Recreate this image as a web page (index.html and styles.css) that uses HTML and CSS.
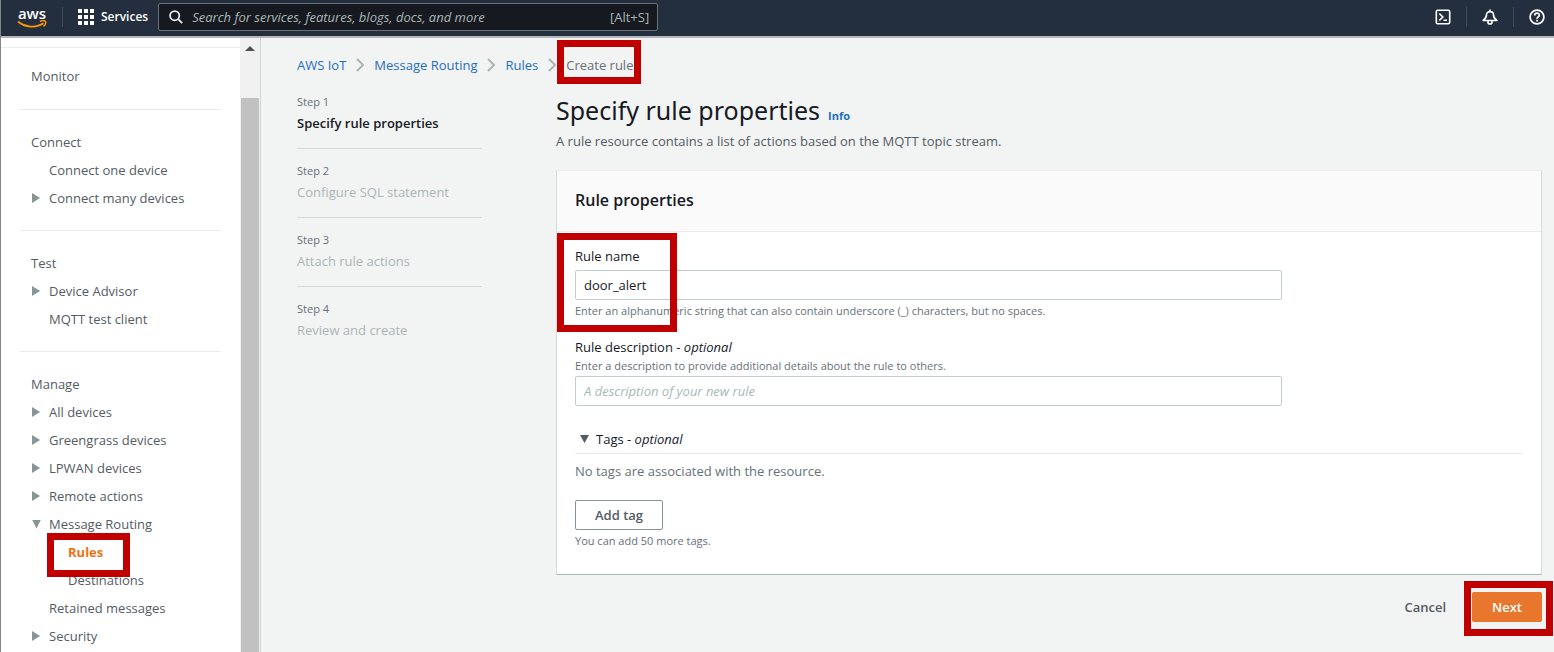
FILE: index.html
```html
<!DOCTYPE html>
<html lang="en">
<head>
<meta charset="utf-8">
<title>Create rule - AWS IoT</title>
<link rel="stylesheet" href="styles.css">
</head>
<body>
<header class="topbar">
  <a class="logo" href="#" aria-label="AWS home">
    <span class="logo-text">aws</span>
    <svg class="logo-smile" viewBox="0 0 30 9" aria-hidden="true"><path d="M1 1.5C8 7.5 19 8.3 26.500 3.300" fill="none" stroke="#f90" stroke-width="1.800"/><path d="M22.800 1.500C25 .6 27.700.6 28.400 1.400C29 2.500 28.200 5 26.600 6.600" fill="none" stroke="#f90" stroke-width="1.400"/></svg>
  </a>
  <span class="sep"></span>
  <button class="services" type="button">
    <svg width="16" height="16" viewBox="0 0 16 16" fill="#fff" aria-hidden="true"><path d="M0 0h4v4H0zM6 0h4v4H6zM12 0h4v4h-4zM0 6h4v4H0zM6 6h4v4H6zM12 6h4v4h-4zM0 12h4v4H0zM6 12h4v4H6zM12 12h4v4h-4z"/></svg>
    Services
  </button>
  <label class="search">
    <svg width="14" height="14" viewBox="0 0 14 14" fill="none" stroke="#e4e7ea" stroke-width="1.800" aria-hidden="true"><circle cx="5.700" cy="5.700" r="4.600"/><path d="M9 9l4.200 4.200"/></svg>
    <input type="search" aria-label="Search" placeholder="Search for services, features, blogs, docs, and more">
    <span class="hint">[Alt+S]</span>
  </label>
  <div class="tools">
    <button type="button" aria-label="CloudShell"><svg width="16" height="16" viewBox="0 0 16 16" fill="none" stroke="#fff" stroke-width="1.600"><rect x="1.300" y="1.300" width="13.400" height="13.400" rx="1.500"/><path d="M4.300 4.500L7.800 8l-3.500 3.500M8.500 11.300h3.500"/></svg></button>
    <span class="sep"></span>
    <button type="button" aria-label="Notifications"><svg width="16" height="16" viewBox="0 0 16 16" fill="none" stroke="#fff" stroke-width="1.600" stroke-linejoin="round"><path d="M1.200 11.500C3.200 10 4.500 8.500 4.500 5.800c0-1.900 1.500-3.200 3.500-3.200S11.500 3.900 11.500 5.800c0 2.700 1.300 4.200 3.300 5.700zM8 .5v2M6 12v1.200c0 2.400 4 2.400 4 0V12"/></svg></button>
    <span class="sep"></span>
    <button type="button" aria-label="Help"><svg width="16" height="16" viewBox="0 0 16 16" fill="none" stroke="#fff" stroke-width="1.700"><circle cx="8" cy="8" r="6.900"/><path d="M5.700 6.400C5.700 3.500 10.300 3.500 10.300 6.200C10.300 7.900 8 7.900 8 9.800M8 10.800v1.700"/></svg></button>
  </div>
</header>

<div class="shell">
  <nav class="sidebar" aria-label="AWS IoT">
    <div class="sections">
      <ul class="section first"><li><a href="#">Monitor</a></li></ul>
      <ul class="section">
        <li class="title">Connect</li>
        <li class="leaf"><a href="#">Connect one device</a></li>
        <li class="branch"><a href="#">Connect many devices</a></li>
      </ul>
      <ul class="section">
        <li class="title">Test</li>
        <li class="branch"><a href="#">Device Advisor</a></li>
        <li class="leaf"><a href="#">MQTT test client</a></li>
      </ul>
      <ul class="section">
        <li class="title">Manage</li>
        <li class="branch"><a href="#">All devices</a></li>
        <li class="branch"><a href="#">Greengrass devices</a></li>
        <li class="branch"><a href="#">LPWAN devices</a></li>
        <li class="branch"><a href="#">Remote actions</a></li>
        <li class="branch open"><a href="#">Message Routing</a></li>
        <li>
          <ul class="sub">
            <li class="marked"><a class="active" href="#" aria-current="page">Rules</a><span class="mark mark-nav"></span></li>
            <li><a href="#">Destinations</a></li>
          </ul>
        </li>
        <li class="leaf"><a href="#">Retained messages</a></li>
        <li class="branch"><a href="#">Security</a></li>
      </ul>
    </div>
    <div class="scrollbar" aria-hidden="true"><span class="arrow"></span><span class="thumb"></span></div>
  </nav>

  <main class="main">
    <nav class="crumbs" aria-label="Breadcrumb">
      <a href="#">AWS IoT</a>
      <svg class="chev" viewBox="0 0 8 14"><path d="M1 1l6 6-6 6"/></svg>
      <a href="#">Message Routing</a>
      <svg class="chev" viewBox="0 0 8 14"><path d="M1 1l6 6-6 6"/></svg>
      <a href="#">Rules</a>
      <svg class="chev" viewBox="0 0 8 14"><path d="M1 1l6 6-6 6"/></svg>
      <span class="marked current">Create rule<span class="mark mark-crumb"></span></span>
    </nav>
    <div class="wizard">
      <ol class="steps">
        <li class="now"><span>Step 1</span><b>Specify rule properties</b></li>
        <li><span>Step 2</span><b>Configure SQL statement</b></li>
        <li><span>Step 3</span><b>Attach rule actions</b></li>
        <li><span>Step 4</span><b>Review and create</b></li>
      </ol>
      <form class="form">
        <div class="heading"><h1>Specify rule properties</h1><a href="#">Info</a></div>
        <p class="intro">A rule resource contains a list of actions based on the MQTT topic stream.</p>
        <section class="panel">
          <h2>Rule properties</h2>
          <div class="body">
            <div class="field marked">
              <label for="name">Rule name</label>
              <input id="name" type="text" value="door_alert">
              <p class="help after">Enter an alphanumeric string that can also contain underscore (_) characters, but no spaces.</p>
              <span class="mark mark-name"></span>
            </div>
            <div class="field">
              <label class="tight" for="desc">Rule description - <i>optional</i></label>
              <p class="help before">Enter a description to provide additional details about the rule to others.</p>
              <input id="desc" type="text" placeholder="A description of your new rule">
            </div>
            <details open>
              <summary><span>Tags - <i>optional</i></span></summary>
              <p class="empty">No tags are associated with the resource.</p>
              <button class="btn outline" type="button">Add tag</button>
              <p class="help after">You can add 50 more tags.</p>
            </details>
          </div>
        </section>
        <div class="actions">
          <button class="btn plain" type="button">Cancel</button>
          <span class="marked"><button class="btn primary" type="button">Next</button><span class="mark mark-next"></span></span>
        </div>
      </form>
    </div>
  </main>
</div>
</body>
</html>
```

FILE: styles.css
```css
* { box-sizing: border-box; }
body {
  margin: 0;
  height: 100vh;
  display: flex;
  flex-direction: column;
  overflow: hidden;
  border-left: 1px solid #858585;
  background: #f2f3f3;
  color: #16191f;
  font: 13px/20px "Open Sans", "Noto Sans", sans-serif;
}
ul, ol { list-style: none; margin: 0; padding: 0; }
h1, h2, p { margin: 0; }
button, input { font: inherit; }
a { color: #1f6fbf; text-decoration: none; }
svg { display: block; flex: none; }

.topbar {
  display: flex;
  align-items: center;
  flex: none;
  height: 38px;
  padding: 0 9px 2px 16px;
  background: #232f3e;
  border-bottom: 2px solid #b3b7ba;
}
.logo { display: flex; flex-direction: column; width: 30px; align-items: center; color: #fff; }
.logo-text { font: 600 15px/14px "Open Sans", sans-serif; }
.logo-smile { width: 30px; height: 9px; }
.sep { width: 1px; height: 20px; background: #414d5c; }
.logo + .sep { margin: 0 15px; }
.services {
  display: flex; align-items: center; gap: 7px;
  padding: 0; border: 0; background: none; color: #fff;
  font-size: 12px; font-weight: 600;
}
.search {
  display: flex; align-items: center; gap: 9px;
  width: 500px; height: 28px; margin-left: 10px; padding: 0 8px 0 10px;
  background: #16191f; border: 1px solid #687078; border-radius: 2px;
  color: #aab7b8;
}
.search input { flex: 1; min-width: 0; padding: 0; border: 0; background: none; color: #fff; outline: 0; }
.search input::placeholder { color: #aab7b8; font-style: italic; opacity: 1; }
.tools { display: flex; align-items: center; gap: 15px; margin-left: auto; }
.tools button { padding: 0; border: 0; background: none; }

.shell { display: flex; flex: 1; min-height: 0; }
.sidebar { display: flex; flex: none; width: 260px; background: #fff; border-right: 1px solid #d0d5d6; overflow: hidden; }
.sections { flex: 1; padding-top: 9px; }
.section { margin: 0 19px; padding: 18px 0 18px 11px; line-height: 28px; border-top: 1px solid #eaeded; }
.section.first { margin: 0; padding: 14px 0 19px 30px; }
.section, .section a { color: #545b64; }
.leaf { padding-left: 18px; }
.branch { display: flex; align-items: center; gap: 8px; padding-left: 1px; }
.branch::before { content: ""; width: 9px; height: 10px; background: #879596; clip-path: polygon(0 0, 90% 50%, 0 100%); }
.branch.open::before { height: 9px; clip-path: polygon(0 0, 100% 0, 50% 100%); }
.sub { padding-left: 37px; }
.section a.active { color: #ec7211; font-weight: 700; }
.scrollbar { display: flex; flex-direction: column; align-items: center; width: 20px; padding-top: 8px; background: #f1f1f1; }
.arrow { width: 10px; height: 5px; background: #505050; clip-path: polygon(50% 0, 100% 100%, 0 100%); }
.thumb { flex: 1; width: 18px; margin-top: 47px; background: #c1c1c1; }

.marked { position: relative; }
.mark { position: absolute; z-index: 2; border: 7px solid #c00000; pointer-events: none; }
.mark-nav { left: -21px; top: -5px; width: 83px; height: 44px; }
.mark-crumb { inset: -15px -8px -9px -9px; }
.mark-name { left: -18px; top: -13px; width: 120px; height: 99px; }
.mark-next { inset: -11px -11px -14px -8px; }

.main { flex: 1; min-width: 0; padding: 17px 12px 0 36px; }
.crumbs { display: flex; align-items: center; gap: 10px; }
.chev { width: 8px; height: 14px; fill: none; stroke: #aab7b8; stroke-width: 2; }
.current { color: #687078; }
.wizard { display: grid; grid-template-columns: 185px minmax(0, 1fr); gap: 74px; padding-top: 17px; }
.steps li { padding-bottom: 14px; }
.steps li + li { padding-top: 12px; border-top: 1px solid #d5dbdb; }
.steps span { display: block; font-size: 11px; line-height: 20px; color: #687078; }
.steps b { display: block; line-height: 22px; font-weight: 400; color: #aab7b8; }
.steps .now b { font-weight: 600; color: #16191f; }

.heading { display: flex; align-items: baseline; gap: 8px; }
h1 { font: 400 25px/36px "Noto Sans", sans-serif; }
.heading a { font-size: 11px; font-weight: 700; }
.intro { margin-top: 3px; color: #545b64; }
.panel {
  margin-top: 19px;
  background: #fff;
  border: 1px solid #d5dbdb;
  border-top-color: #eaeded;
  border-bottom-color: #aab7b8;
}
h2 { padding: 17px 18px 19px; font-size: 16px; line-height: 24px; font-weight: 600; background: #fafafa; border-bottom: 1px solid #eaeded; }
.body { padding: 14px 18px 24px; }
.field { margin-bottom: 17px; }
.field label { display: block; margin-bottom: 4px; }
.field label.tight { margin: 0; }
.field input {
  display: block;
  width: calc(75% - 4px);
  height: 30px;
  padding: 0 8px;
  border: 1px solid #c4cdce;
  border-radius: 2px;
  background: #fff;
  color: #16191f;
}
.field input::placeholder { color: #aab7b8; font-style: italic; opacity: 1; }
.help { font-size: 11px; line-height: 18px; color: #687078; }
.help.before { margin-bottom: 1px; }
.help.after { margin-top: 2px; }
details { margin-top: 23px; }
summary { display: flex; align-items: center; gap: 7px; padding: 0 0 4px 5px; border-bottom: 1px solid #eaeded; list-style: none; }
summary::before { content: ""; width: 9px; height: 8px; background: #545b64; clip-path: polygon(0 0, 100% 0, 50% 100%); }
.empty { margin: 7px 0 19px; color: #687078; }
.btn { height: 30px; padding: 0 19px; border: 1px solid transparent; border-radius: 2px; font-weight: 600; color: #545b64; background: none; }
.outline { border-color: #879596; background: #fff; }
.primary { background: #e8762c; color: #fff; }
.actions { display: flex; justify-content: flex-end; gap: 6px; margin-top: 17px; }
.actions .marked { display: flex; }
```
